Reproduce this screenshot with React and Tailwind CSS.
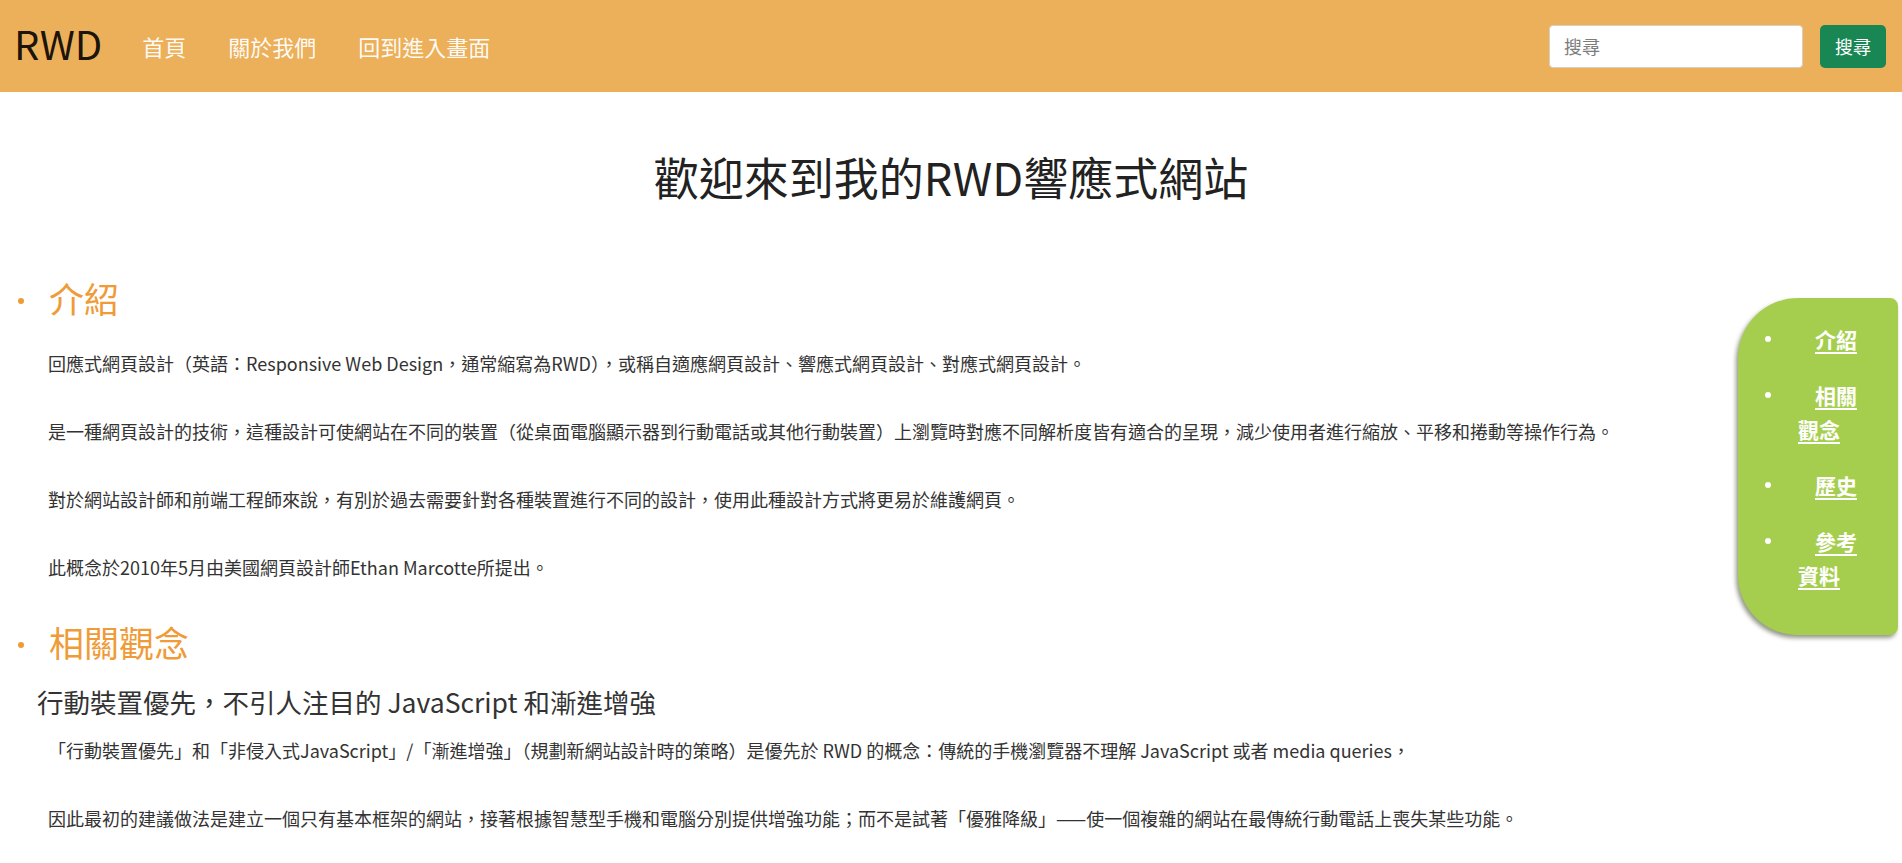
import React from "react";

const FONT = { fontFamily: '"Noto Sans CJK TC", "Noto Sans", sans-serif' };

const sideLinks = [
  { id: "intro", label: "介紹" },
  { id: "concept", label: "相關觀念" },
  { id: "history", label: "歷史" },
  { id: "ref", label: "參考資料" },
];

function Navbar() {
  return (
    <nav className="flex items-center h-[92px] bg-[#ecaf5a] pl-[14px] pr-[16px]">
      <a href="#" className="text-[40px] leading-none text-black/90 mr-[40px] -mt-[6px]">
        RWD
      </a>
      <ul className="flex items-center gap-[42px] text-[22px] text-white/95">
        <li><a href="#">首頁</a></li>
        <li><a href="#">關於我們</a></li>
        <li><a href="#">回到進入畫面</a></li>
      </ul>
      <form className="ml-auto flex items-center gap-[17px]" onSubmit={(e) => e.preventDefault()}>
        <input
          type="search"
          placeholder="搜尋"
          className="w-[254px] h-[43px] rounded-[4px] border border-[#d6d0c4] bg-white px-[14px] text-[18px] text-[#495057] placeholder:text-[#7d7d7d] outline-none"
        />
        <button
          type="submit"
          className="w-[66px] h-[43px] rounded-[5px] bg-[#198754] text-[18px] text-white"
        >
          搜尋
        </button>
      </form>
    </nav>
  );
}

function SectionTitle({ children }) {
  return (
    <h2 className="relative pl-[49px] text-[35px] leading-[42px] text-[#ef9b38]">
      <span className="absolute left-[18px] top-[21px] w-[6px] h-[6px] rounded-full bg-[#ef9b38]" />
      {children}
    </h2>
  );
}

function P({ children }) {
  return <p className="pl-[48px] mb-[40px] text-[18px] leading-[28px] text-[#333]">{children}</p>;
}

function SideNav() {
  return (
    <aside className="absolute right-[4px] top-[298px] w-[160px] bg-[#a6ce4e] rounded-tl-[60px] rounded-bl-[60px] rounded-tr-[8px] rounded-br-[8px] shadow-[-2px_3px_4px_rgba(60,70,40,0.55)] pt-[24px] pb-[43px] pl-[27px]">
      <ul className="flex flex-col gap-[22px]">
        {sideLinks.map((l) => (
          <li key={l.id} className="flex items-start">
            <span className="mt-[14px] w-[6px] h-[6px] rounded-full bg-white shrink-0" />
            <a
              href={`#${l.id}`}
              className="ml-[27px] w-[68px] indent-[17px] text-[21px] leading-[34px] font-bold text-white underline underline-offset-[4px] decoration-[2px]"
            >
              {l.label}
            </a>
          </li>
        ))}
      </ul>
    </aside>
  );
}

export default function App() {
  return (
    <div className="relative min-h-[863px] bg-white overflow-hidden" style={FONT}>
      <Navbar />

      <h1 className="mt-[58px] text-center text-[45px] leading-[53px] text-[#222]">
        歡迎來到我的RWD響應式網站
      </h1>

      <main className="mt-[74px]">
        <section id="intro">
          <SectionTitle>介紹</SectionTitle>
          <div className="mt-[30px]">
            <P>回應式網頁設計（英語：Responsive Web Design，通常縮寫為RWD），或稱自適應網頁設計、響應式網頁設計、對應式網頁設計。</P>
            <P>是一種網頁設計的技術，這種設計可使網站在不同的裝置（從桌面電腦顯示器到行動電話或其他行動裝置）上瀏覽時對應不同解析度皆有適合的呈現，減少使用者進行縮放、平移和捲動等操作行為。</P>
            <P>對於網站設計師和前端工程師來說，有別於過去需要針對各種裝置進行不同的設計，使用此種設計方式將更易於維護網頁。</P>
            <P>此概念於2010年5月由美國網頁設計師Ethan Marcotte所提出。</P>
          </div>
        </section>

        <section id="concept">
          <SectionTitle>相關觀念</SectionTitle>
          <h3 className="mt-[23px] pl-[37px] text-[26.5px] leading-[32px] text-[#333]">
            行動裝置優先，不引人注目的 JavaScript 和漸進增強
          </h3>
          <div className="mt-[18px]">
            <P>「行動裝置優先」和「非侵入式JavaScript」/「漸進增強」（規劃新網站設計時的策略）是優先於 RWD 的概念：傳統的手機瀏覽器不理解 JavaScript 或者 media queries，</P>
            <P>因此最初的建議做法是建立一個只有基本框架的網站，接著根據智慧型手機和電腦分別提供增強功能；而不是試著「優雅降級」——使一個複雜的網站在最傳統行動電話上喪失某些功能。</P>
          </div>
        </section>
      </main>

      <SideNav />
    </div>
  );
}
